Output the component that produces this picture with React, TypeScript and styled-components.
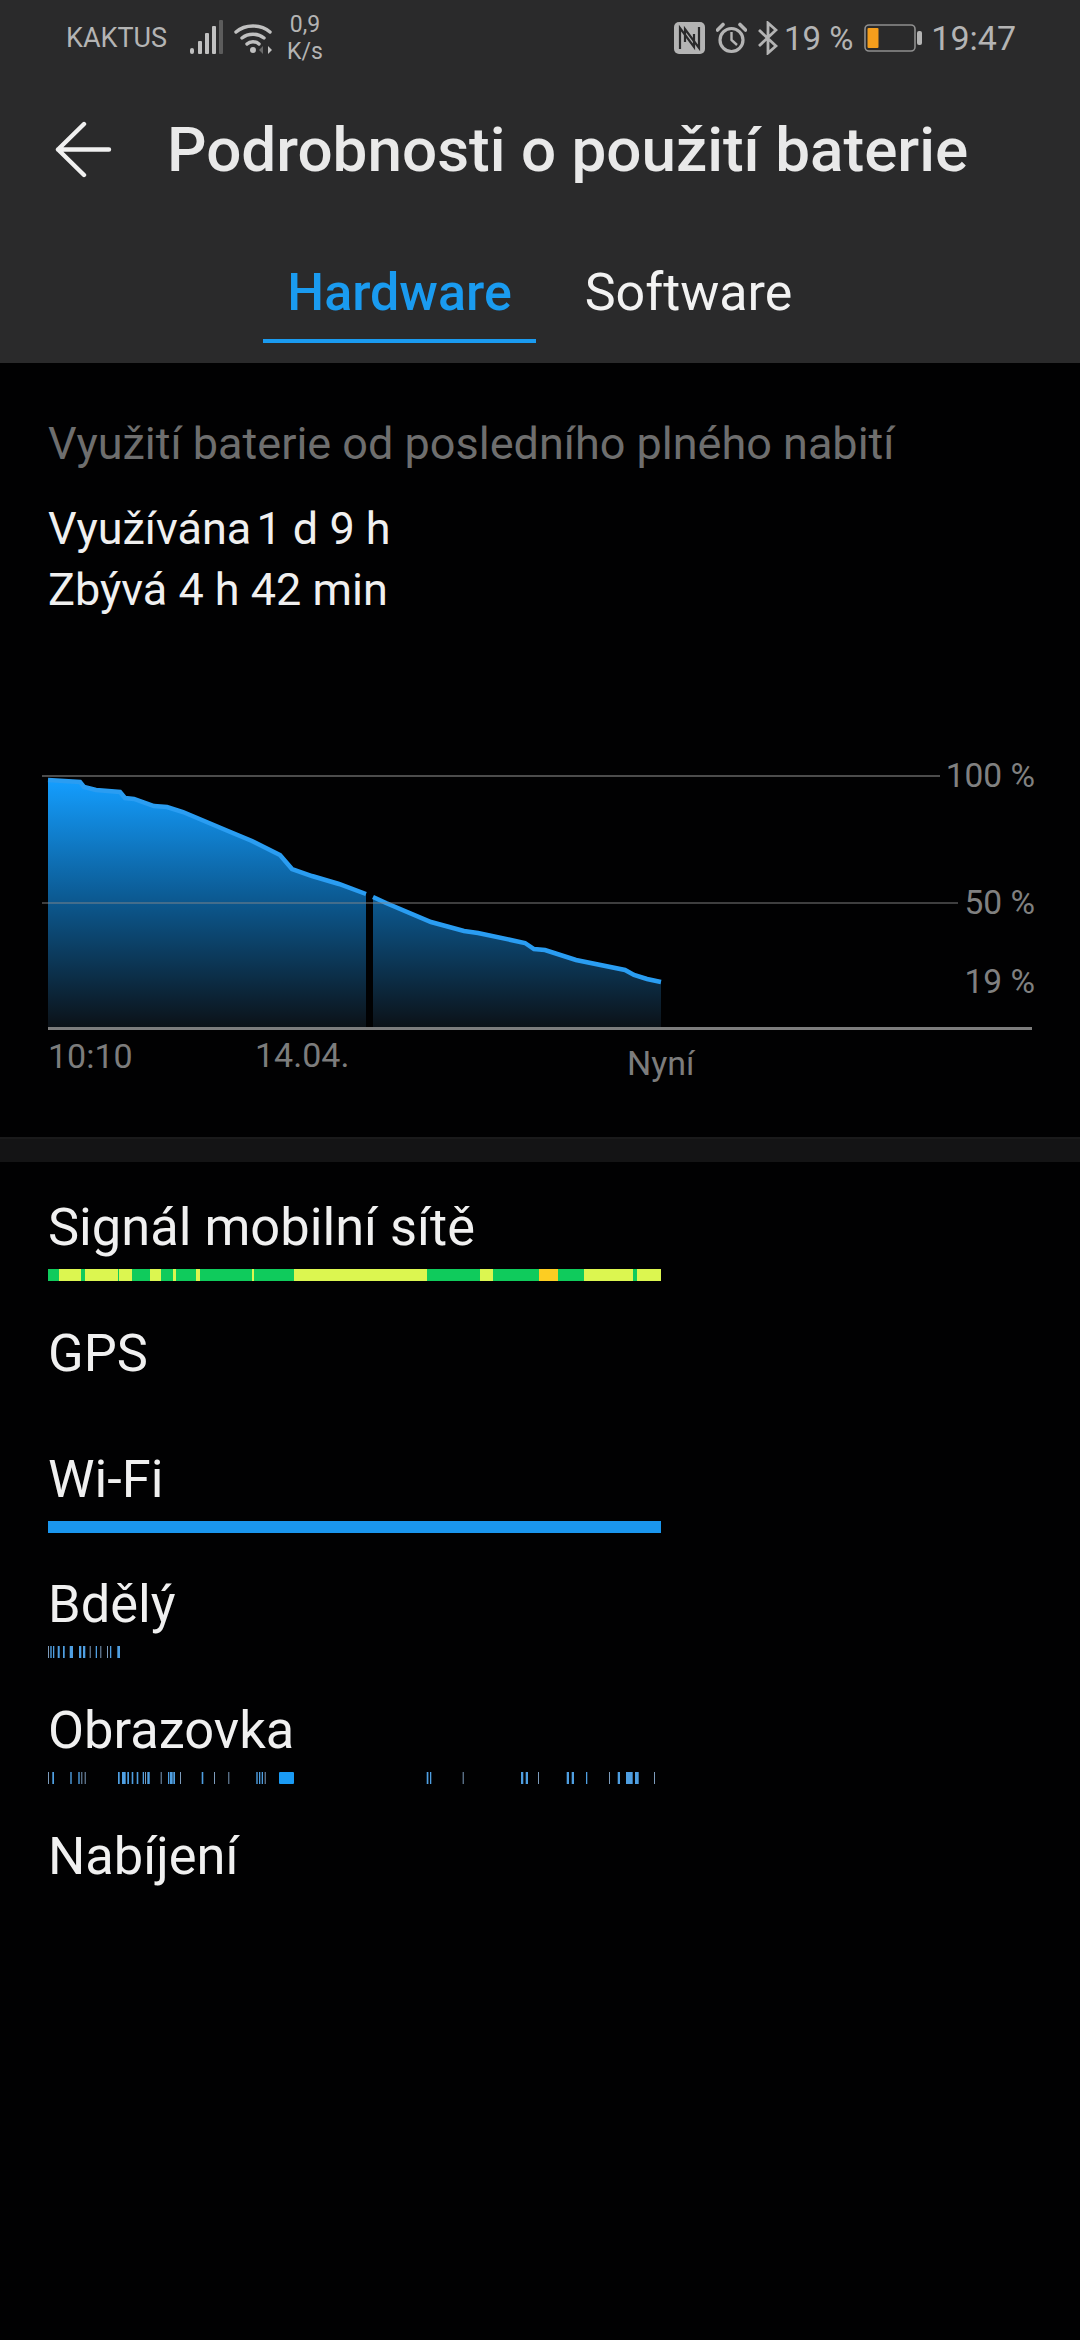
import React from 'react';
import styled, { createGlobalStyle } from 'styled-components';

const GlobalStyle = createGlobalStyle`
  html, body {
    margin: 0;
    padding: 0;
    background: #000;
    font-family: Roboto, "Noto Sans", sans-serif;
  }
`;

const Page = styled.div`
  width: 1080px;
  height: 2340px;
  overflow: hidden;
  background: #010102;
  color: #f0f0f0;
`;

const Header = styled.header`
  height: 363px;
  background: #2a2a2b;
`;

const StatusBar = styled.div`
  height: 76px;
  padding: 0 64px 0 66px;
  display: flex;
  align-items: center;
  justify-content: space-between;
  color: #b4b4b4;
`;

const StatusGroup = styled.div`
  display: flex;
  align-items: center;
`;

const Carrier = styled.span`
  font-size: 27px;
  width: 124px;
`;

const Speed = styled.span`
  font-size: 23px;
  line-height: 27px;
  margin-left: 15px;
  text-align: center;
`;

const Level = styled.span`
  font-size: 33px;
  margin: 0 11px 0 6px;
`;

const Clock = styled.span`
  font-size: 34px;
`;

const TitleRow = styled.div`
  height: 148px;
  box-sizing: border-box;
  padding: 0 0 2px 54px;
  display: flex;
  align-items: center;
`;

const Title = styled.h1`
  margin: 0 0 0 55px;
  font-size: 62px;
  font-weight: 500;
  color: #e9e9e9;
  white-space: nowrap;
`;

const Tabs = styled.div`
  display: flex;
  padding-left: 263px;
`;

const Tab = styled.div<{ $active?: boolean }>`
  width: ${(p) => (p.$active ? '273px' : '305px')};
  height: 119px;
  box-sizing: border-box;
  padding-top: 38px;
  text-align: center;
  font-size: 52px;
  line-height: 62px;
  font-weight: ${(p) => (p.$active ? 500 : 400)};
  color: ${(p) => (p.$active ? '#1a9bf0' : '#f2f2f2')};
  border-bottom: 4px solid ${(p) => (p.$active ? '#1a9bf0' : 'transparent')};
`;

const Summary = styled.section`
  padding: 52px 48px 0;
  height: 397px;
  box-sizing: border-box;
`;

const Caption = styled.div`
  font-size: 45px;
  line-height: 58px;
  margin-bottom: 25px;
  color: #6e6e6e;
  white-space: nowrap;
`;

const Stat = styled.div`
  font-size: 45px;
  line-height: 61px;
  color: #f0f0f0;
`;

const TightValue = styled.span`
  margin-left: -6px;
`;

const ChartBox = styled.div`
  position: relative;
  height: 377px;
`;

const ChartSvg = styled.svg`
  display: block;
`;

const Percent = styled.span<{ $y: number }>`
  position: absolute;
  right: 45px;
  top: ${(p) => p.$y}px;
  font-size: 33.5px;
  line-height: 40px;
  color: #808080;
`;

const TimeLabel = styled.span<{ $x: number; $y: number }>`
  position: absolute;
  left: ${(p) => p.$x}px;
  top: ${(p) => p.$y}px;
  font-size: 34px;
  line-height: 40px;
  color: #7c7c7c;
`;

const Divider = styled.div`
  height: 25px;
  background: #141415;
  border-top: 2px solid #1a1a1b;
  box-sizing: border-box;
`;

const List = styled.section`
  padding: 29px 48px 0;
`;

const Row = styled.div`
  height: 125.8px;
`;

const RowLabel = styled.div`
  font-size: 52.4px;
  line-height: 72px;
  color: #f0f0f0;
`;

const SignalBar = styled.div`
  margin-top: 6px;
  width: 613px;
  height: 12px;
  display: flex;
`;

const Segment = styled.div<{ $color: string }>`
  background: ${(p) => p.$color};
`;

const WifiBar = styled.div`
  margin-top: 6px;
  width: 613px;
  height: 12px;
  background: #1a96ee;
`;

const Ticks = styled.svg`
  display: block;
  margin-top: 6px;
`;

const G = '#0fcb5c';
const Y = '#dcf650';
const O = '#fdcd22';

// sirky useku signalu v px
const signal: [number, string][] = [
  [11, G], [22, Y], [4, G], [33, Y], [1, G], [13, Y], [18, G], [11, Y], [12, G], [3, Y], [20, G],
  [4, Y], [52, G], [2, Y], [40, G], [133, Y], [53, G], [13, Y], [46, G], [19, O], [26, G], [49, Y],
  [4, G], [24, Y],
];

// [od, do] v px od leveho okraje radku
const awake: [number, number][] = [
  [0, 1], [2.3, 3.7], [5, 6.3], [9.7, 11.7], [15, 16.7], [21.7, 25], [31, 33.3], [35, 37.3],
  [41.7, 42.7], [47.7, 49], [52.3, 53.3], [59, 60], [62, 63.3], [69.3, 72],
];

const screenTicks: [number, number][] = [
  [0, 1], [4.3, 6], [22.3, 23.7], [30.3, 31.7], [33.3, 34.3], [36.7, 37.7], [70, 71.7], [74, 77.7],
  [79.3, 81], [83.7, 85.3], [88.7, 90.3], [94.7, 96], [97, 98], [99.3, 101.7], [112.7, 113.7],
  [120, 121.3], [122, 124.7], [125.3, 127], [132, 133], [153.7, 155.3], [166, 167], [180.3, 181.3],
  [208.3, 209.7], [211, 212.3], [213.7, 215], [216.7, 217.7], [378.7, 380.4], [382, 383.3], [414.7, 415.7],
  [473, 475.3], [477.7, 480], [490, 491], [518.7, 521], [523.7, 526], [538, 539.3], [561, 562],
  [569.7, 572], [578, 584.7], [587, 590.7], [606, 607],
];

const topLine: [number, number][] = [
  [48, 20], [80, 22], [84, 27], [96, 30], [120, 32], [125, 38], [134, 39], [154, 46], [167, 47],
  [183, 52], [228, 71], [252, 81], [280, 95], [292, 109], [312, 116], [339, 124], [366, 134],
];

const bottomLine: [number, number][] = [
  [373, 137], [386, 143], [431, 162], [464, 171], [478, 173], [525, 183], [534, 189], [545, 190],
  [576, 200], [625, 210], [634, 215], [647, 219], [661, 222],
];

const toPoints = (line: [number, number][]) => line.map(([x, y]) => `${x},${y}`).join(' ');

const areaPath = (line: [number, number][]) => {
  const first = line[0][0];
  const last = line[line.length - 1][0];
  return `M${first},267 L${toPoints(line)} L${last},267 Z`;
};

const TickBar = ({ items, bright }: { items: [number, number][]; bright?: number }) => (
  <Ticks width="620" height="12">
    {items.map(([a, b], i) => (
      <rect key={i} x={a} y="0" width={b - a} height="12" fill={b - a < 1.2 ? '#7d9cbc' : '#4f9fe2'} />
    ))}
    {bright !== undefined && <rect x={bright} y="0" width="15" height="12" rx="1" fill="#1a9bf5" />}
  </Ticks>
);

const SignalIcon = () => (
  <svg width="34" height="36" viewBox="0 0 34 36" style={{ marginRight: 10 }}>
    <rect x="0" y="28" width="4" height="6" rx="2" fill="#c0c0c0" />
    <rect x="8" y="21" width="4" height="13" rx="1" fill="#c0c0c0" />
    <rect x="15" y="13" width="4" height="21" rx="1" fill="#c0c0c0" />
    <rect x="22" y="6" width="4" height="28" rx="1" fill="#c0c0c0" />
    <rect x="29" y="0" width="4" height="34" rx="1" fill="#5c5c5c" />
  </svg>
);

const WifiIcon = () => (
  <svg width="38" height="34" viewBox="0 0 38 34" fill="none" stroke="#c0c0c0" strokeWidth="3.4" strokeLinecap="round">
    <path d="M2 11 C11 3 27 3 36 11" />
    <path d="M8 17 C14 12 24 12 30 17" />
    <path d="M13 23 C16 20 22 20 25 23" />
    <circle cx="19" cy="29" r="3" fill="#c0c0c0" stroke="none" />
    <path d="M34 25 L38 29 L34 33 Z" fill="#c0c0c0" stroke="none" />
    <path d="M29 25 L25 29 L29 33 Z" fill="#6a6a6a" stroke="none" />
  </svg>
);

const NfcIcon = () => (
  <svg width="31" height="32" viewBox="0 0 31 32" style={{ marginRight: 11 }}>
    <rect width="31" height="32" rx="5" fill="#b4b4b4" />
    <g fill="none" stroke="#2a2a2b" strokeWidth="2.2">
      <path d="M6 27 L6 6 L20 25 L20 12" />
      <path d="M25 5 L25 26 L11 7 L11 20" />
    </g>
  </svg>
);

const AlarmIcon = () => (
  <svg width="31" height="32" viewBox="0 0 31 32" fill="none" stroke="#b4b4b4" strokeWidth="3.2" style={{ marginRight: 11 }}>
    <circle cx="15.5" cy="18" r="11.5" />
    <path d="M15.5 10 L15.5 18 L21 23" strokeWidth="2.4" />
    <path d="M1.5 8 L7 2.5 M29.5 8 L24 2.5" strokeWidth="3.6" strokeLinecap="round" />
  </svg>
);

const BluetoothIcon = () => (
  <svg width="20" height="34" viewBox="0 0 20 34" fill="none" stroke="#b4b4b4" strokeWidth="2.8">
    <path d="M1 9 L18 25 L10 32 L10 2 L18 9 L1 25" />
  </svg>
);

const BatteryIcon = () => (
  <svg width="58" height="28" viewBox="0 0 58 28" style={{ marginRight: 9 }}>
    <rect x="1" y="1" width="50" height="26" rx="4" fill="none" stroke="#8f8f8f" strokeWidth="1.6" />
    <rect x="3.5" y="4" width="11" height="20" rx="1" fill="#f59e1c" />
    <rect x="53" y="7" width="5" height="14" rx="2" fill="#b4b4b4" />
  </svg>
);

const BackIcon = () => (
  <svg width="58" height="57" viewBox="0 0 58 57" fill="none" stroke="#f0f0f0" strokeWidth="4.4" strokeLinecap="round" strokeLinejoin="round">
    <path d="M55 28.5 L4 28.5 M30 3 L4 28.5 L30 54" />
  </svg>
);

const App = () => (
  <Page>
    <GlobalStyle />
    <Header>
      <StatusBar>
        <StatusGroup>
          <Carrier>KAKTUS</Carrier>
          <SignalIcon />
          <WifiIcon />
          <Speed>
            0,9
            <br />
            K/s
          </Speed>
        </StatusGroup>
        <StatusGroup>
          <NfcIcon />
          <AlarmIcon />
          <BluetoothIcon />
          <Level>19 %</Level>
          <BatteryIcon />
          <Clock>19:47</Clock>
        </StatusGroup>
      </StatusBar>
      <TitleRow>
        <BackIcon />
        <Title>Podrobnosti o použití baterie</Title>
      </TitleRow>
      <Tabs>
        <Tab $active>Hardware</Tab>
        <Tab>Software</Tab>
      </Tabs>
    </Header>

    <Summary>
      <Caption>Využití baterie od posledního plného nabití</Caption>
      <Stat>
        Využívána <TightValue>1 d 9 h</TightValue>
      </Stat>
      <Stat>Zbývá 4 h 42 min</Stat>
    </Summary>

    <ChartBox>
      <ChartSvg width="1080" height="377" viewBox="0 0 1080 377">
        <defs>
          <linearGradient id="fill" x1="0" y1="20" x2="0" y2="267" gradientUnits="userSpaceOnUse">
            <stop offset="0" stopColor="#149eff" />
            <stop offset="0.45" stopColor="#0c5e99" />
            <stop offset="1" stopColor="#0c1218" />
          </linearGradient>
        </defs>
        <path d={areaPath(topLine)} fill="url(#fill)" />
        <path d={areaPath(bottomLine)} fill="url(#fill)" />
        <polyline points={toPoints(topLine)} fill="none" stroke="#2a9df2" strokeWidth="4.5" />
        <polyline points={toPoints(bottomLine)} fill="none" stroke="#2a9df2" strokeWidth="4.5" />
        <rect x="42" y="15" width="898" height="2" fill="#8a8a8a" opacity="0.55" />
        <rect x="42" y="142" width="916" height="2" fill="#8a8a8a" opacity="0.45" />
        <rect x="48" y="267" width="984" height="3" fill="#7d7d7d" />
      </ChartSvg>
      <Percent $y={-4}>100 %</Percent>
      <Percent $y={123}>50 %</Percent>
      <Percent $y={202}>19 %</Percent>
      <TimeLabel $x={48} $y={276}>10:10</TimeLabel>
      <TimeLabel $x={255} $y={275}>14.04.</TimeLabel>
      <TimeLabel $x={627} $y={283}>Nyní</TimeLabel>
    </ChartBox>

    <Divider />

    <List>
      <Row>
        <RowLabel>Signál mobilní sítě</RowLabel>
        <SignalBar>
          {signal.map(([w, c], i) => (
            <Segment key={i} $color={c} style={{ width: w }} />
          ))}
        </SignalBar>
      </Row>
      <Row>
        <RowLabel>GPS</RowLabel>
      </Row>
      <Row>
        <RowLabel>Wi-Fi</RowLabel>
        <WifiBar />
      </Row>
      <Row>
        <RowLabel>Bdělý</RowLabel>
        <TickBar items={awake} />
      </Row>
      <Row>
        <RowLabel>Obrazovka</RowLabel>
        <TickBar items={screenTicks} bright={231} />
      </Row>
      <Row>
        <RowLabel>Nabíjení</RowLabel>
      </Row>
    </List>
  </Page>
);

export default App;
